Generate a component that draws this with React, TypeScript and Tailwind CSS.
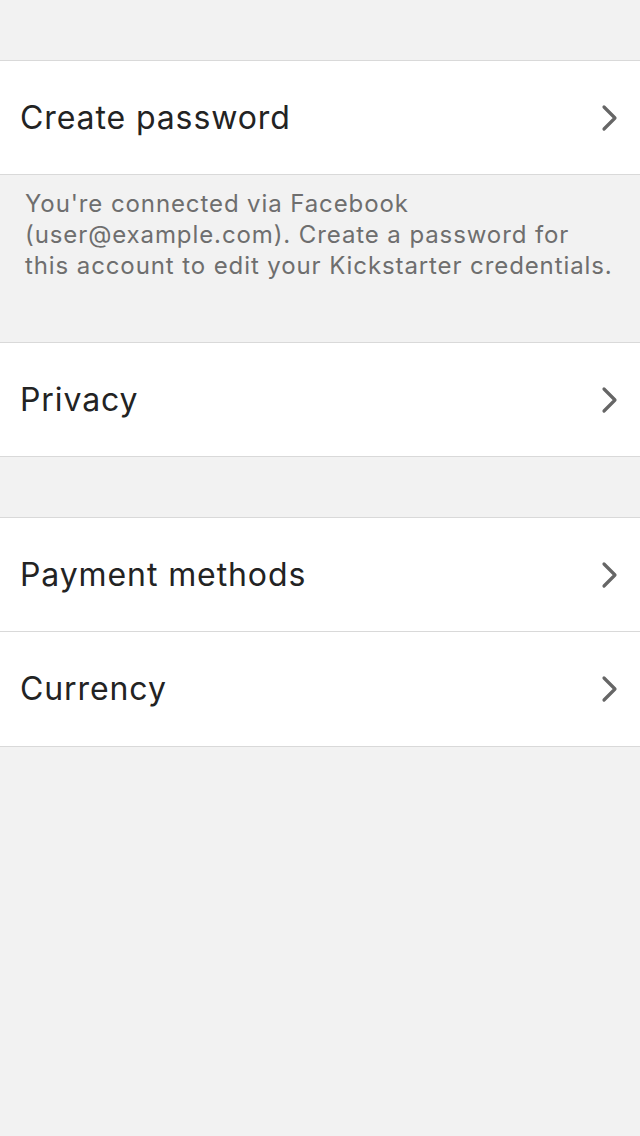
import React from "react";

const Chevron = () => (
  <svg width="20" height="28" viewBox="0 0 20 28" className="shrink-0">
    <path d="M4 3 L15 14 L4 25" fill="none" stroke="#666666" strokeWidth="3.2" strokeLinecap="round" strokeLinejoin="round" />
  </svg>
);

const Row = ({ label, last }: { label: string; last?: boolean }) => (
  <div className={`flex items-center justify-between ${last ? "h-[113px]" : "h-[114px] border-b border-[#d9d9d9]"} bg-white pl-[20px] pr-[20px]`}>
    <span className="text-[32px] text-[#232323] tracking-[0.9px]">{label}</span>
    <Chevron />
  </div>
);

export default function App() {
  return (
    <div className="min-h-[1136px] w-[640px] bg-[#f2f2f2]" style={{ fontFamily: "Inter, 'Noto Sans', sans-serif" }}>
      <div className="h-[60px]" />
      <div className="border-y border-[#d9d9d9]">
        <Row label="Create password" last />
      </div>
      <div className="h-[167px] px-[25px] pt-[13px] text-[24px] leading-[31px] tracking-[0.9px] text-[#6e6e6e]">
        You're connected via Facebook (user@example.com). Create a password for this account to edit your Kickstarter credentials.
      </div>
      <div className="border-y border-[#d9d9d9]">
        <Row label="Privacy" last />
      </div>
      <div className="h-[60px]" />
      <div className="border-y border-[#d9d9d9]">
        <Row label="Payment methods" />
        <div className="h-[114px] flex items-center justify-between bg-white pl-[20px] pr-[20px]">
          <span className="text-[32px] text-[#232323] tracking-[0.9px]">Currency</span>
          <Chevron />
        </div>
      </div>
    </div>
  );
}
